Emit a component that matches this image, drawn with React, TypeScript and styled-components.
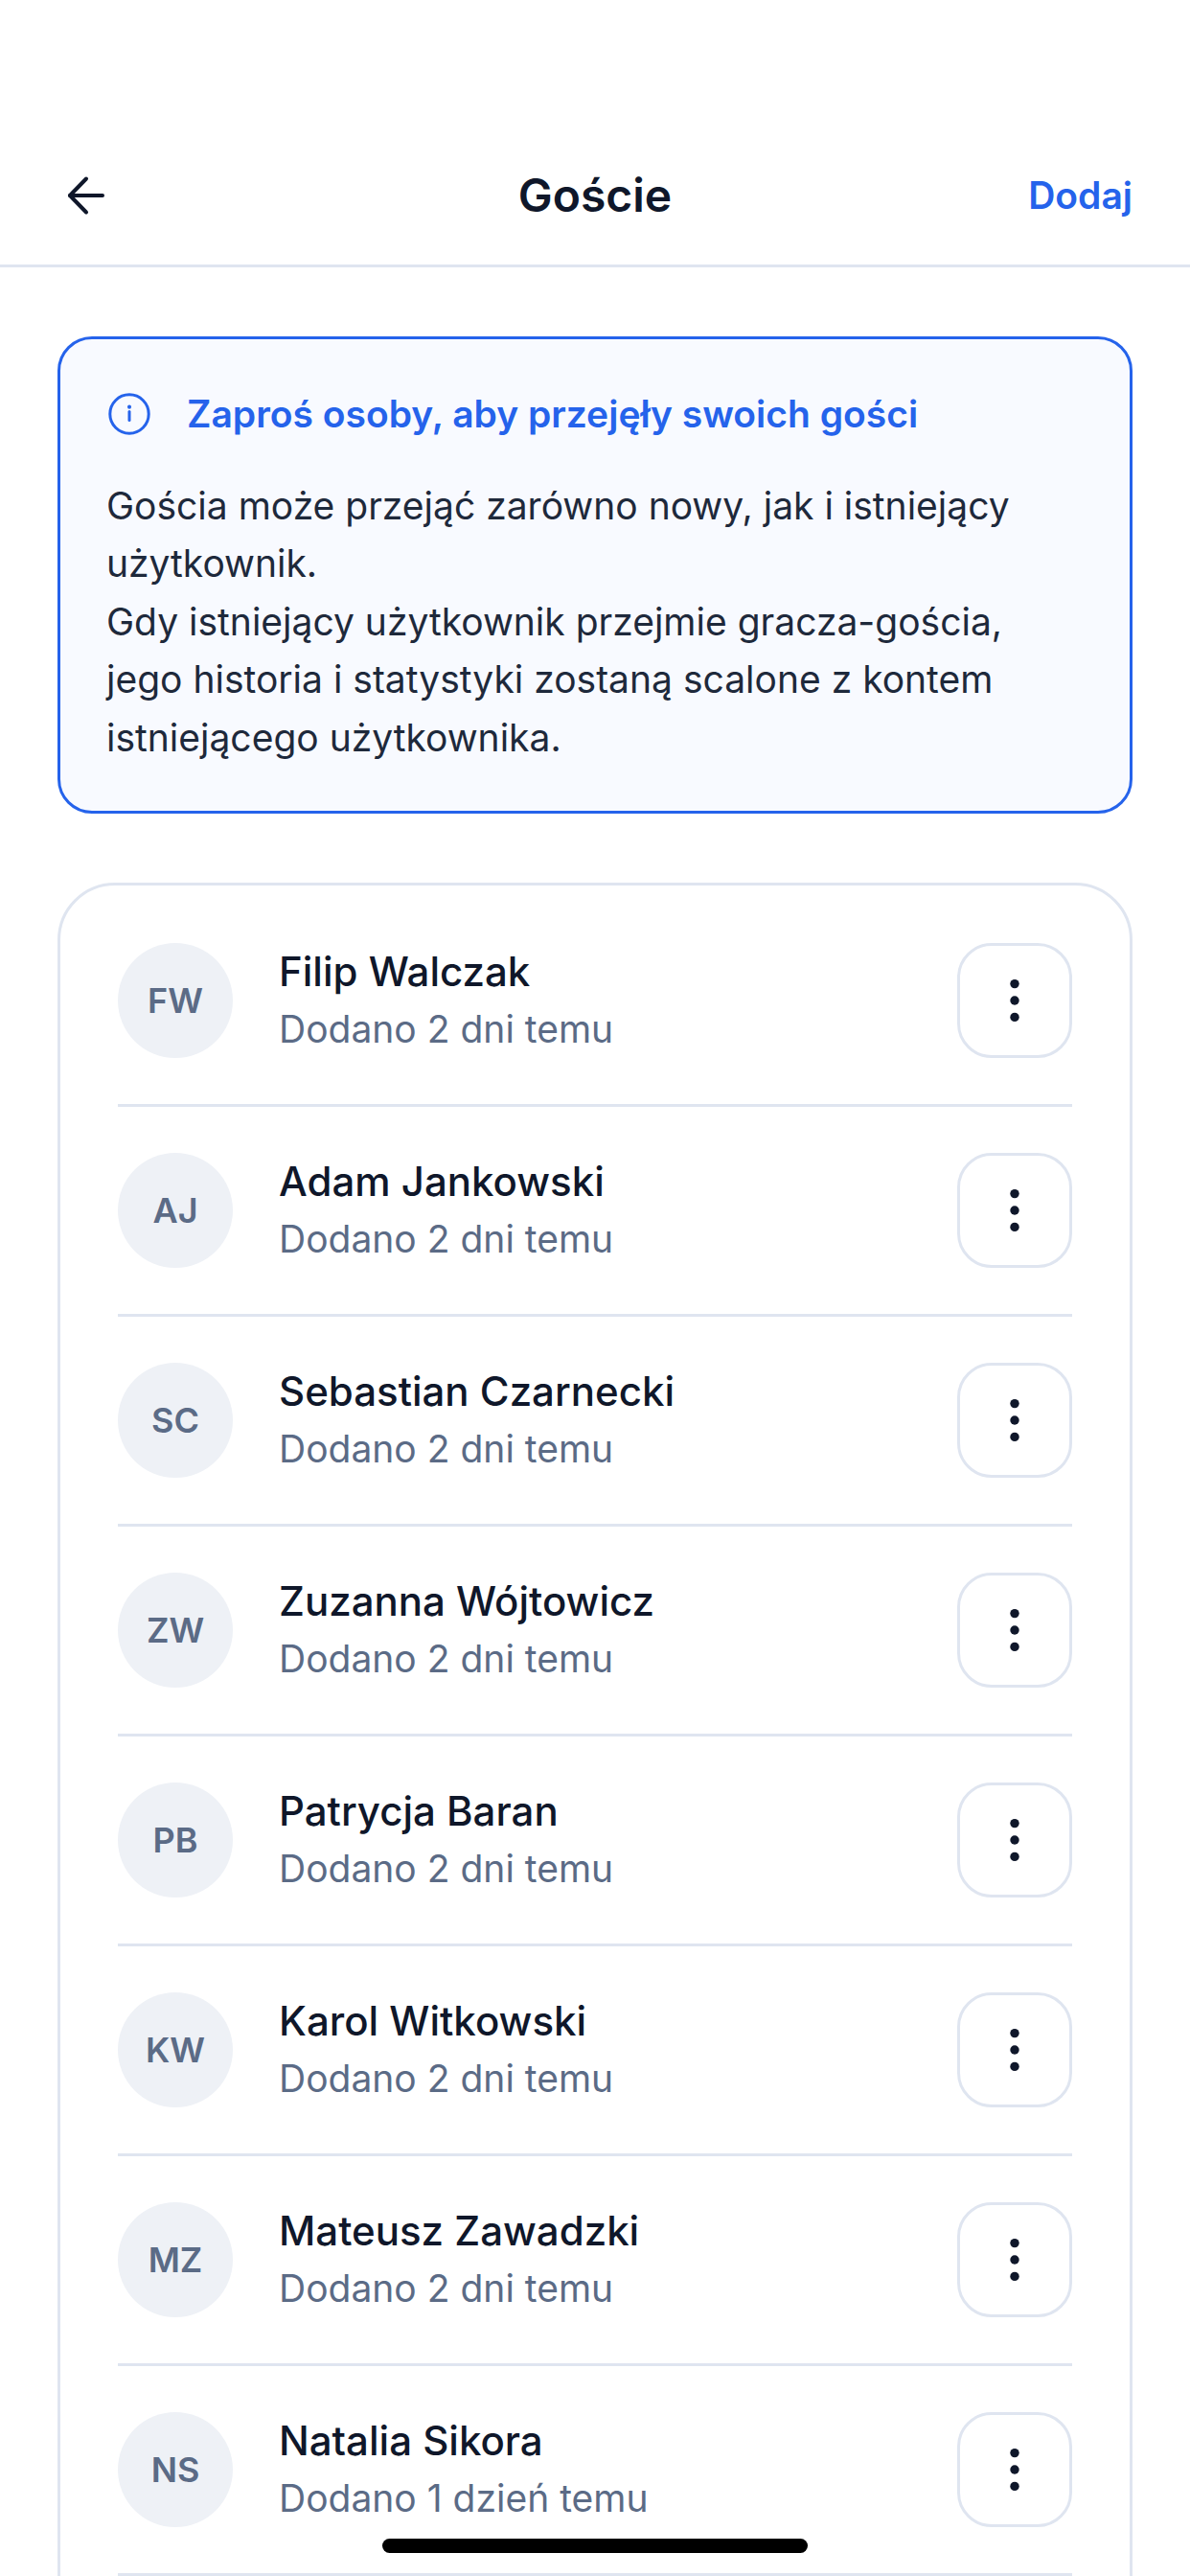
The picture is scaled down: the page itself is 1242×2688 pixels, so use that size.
import { createGlobalStyle } from "styled-components";
import styled from "styled-components";

const guests = [
  { initials: "FW", name: "Filip Walczak", added: "Dodano 2 dni temu" },
  { initials: "AJ", name: "Adam Jankowski", added: "Dodano 2 dni temu" },
  { initials: "SC", name: "Sebastian Czarnecki", added: "Dodano 2 dni temu" },
  { initials: "ZW", name: "Zuzanna Wójtowicz", added: "Dodano 2 dni temu" },
  { initials: "PB", name: "Patrycja Baran", added: "Dodano 2 dni temu" },
  { initials: "KW", name: "Karol Witkowski", added: "Dodano 2 dni temu" },
  { initials: "MZ", name: "Mateusz Zawadzki", added: "Dodano 2 dni temu" },
  { initials: "NS", name: "Natalia Sikora", added: "Dodano 1 dzień temu" },
];

const App = () => {
  return (
    <Screen>
      <GlobalStyle />
      <Header>
        <BackButton aria-label="Wstecz">
          <svg width="42" height="42" viewBox="0 0 42 42" fill="none" stroke="#0f172a" strokeWidth="4" strokeLinecap="round" strokeLinejoin="round">
            <path d="M37 21H3" />
            <path d="M20 3.5 3 21l17 17.5" />
          </svg>
        </BackButton>
        <Title>Goście</Title>
        <AddLink>Dodaj</AddLink>
      </Header>
      <Content>
        <InfoBox>
          <InfoHeading>
            <svg width="48" height="48" viewBox="0 0 48 48" fill="none" stroke="#2563eb" strokeWidth="3" strokeLinecap="round">
              <circle cx="24" cy="24" r="20.2" />
              <path d="M24 21.5v9" />
              <path d="M24 16.5v.2" strokeWidth="4" />
            </svg>
            <span>Zaproś osoby, aby przejęły swoich gości</span>
          </InfoHeading>
          <InfoText>
            Gościa może przejąć zarówno nowy, jak i istniejący użytkownik.
            <br />
            Gdy istniejący użytkownik przejmie gracza-gościa, jego historia i statystyki zostaną scalone z kontem istniejącego użytkownika.
          </InfoText>
        </InfoBox>
        <GuestCard>
          {guests.map((guest) => (
            <GuestRow key={guest.name}>
              <Avatar>{guest.initials}</Avatar>
              <GuestText>
                <GuestName>{guest.name}</GuestName>
                <GuestAdded>{guest.added}</GuestAdded>
              </GuestText>
              <MoreButton aria-label="Więcej">
                <svg width="12" height="46" viewBox="0 0 12 46" fill="#0f172a">
                  <circle cx="6" cy="5.6" r="4.7" />
                  <circle cx="6" cy="23" r="4.7" />
                  <circle cx="6" cy="40.4" r="4.7" />
                </svg>
              </MoreButton>
            </GuestRow>
          ))}
        </GuestCard>
      </Content>
      <HomeIndicator />
    </Screen>
  );
};

export default App;

const GlobalStyle = createGlobalStyle`
  html, body {
    margin: 0;
    padding: 0;
    background: #ffffff;
  }
  * {
    box-sizing: border-box;
  }
`;

const Screen = styled.div`
  position: relative;
  width: 1242px;
  height: 2688px;
  overflow: hidden;
  background: #ffffff;
  font-family: Inter, "Noto Sans", sans-serif;
  color: #0f172a;
`;

const Header = styled.header`
  height: 279px;
  padding: 132px 60px 0;
  border-bottom: 3px solid #dfe5f0;
  display: grid;
  grid-template-columns: 1fr auto 1fr;
  align-items: center;
`;

const BackButton = styled.button`
  justify-self: start;
  width: 60px;
  height: 60px;
  margin-left: 10px;
  padding: 0;
  border: 0;
  background: none;
  display: flex;
  align-items: center;
`;

const Title = styled.h1`
  margin: 0;
  font-size: 48px;
  font-weight: 600;
  line-height: 60px;
`;

const AddLink = styled.span`
  justify-self: end;
  font-size: 39px;
  font-weight: 600;
  line-height: 60px;
  color: #2563eb;
`;

const Content = styled.main`
  padding: 72px 60px 0;
  display: flex;
  flex-direction: column;
  gap: 72px;
`;

const InfoBox = styled.section`
  padding: 48px 48px 46px;
  border: 3px solid #2563eb;
  border-radius: 36px;
  background: #f8faff;
`;

const InfoHeading = styled.div`
  display: flex;
  align-items: center;
  gap: 36px;
  font-size: 39px;
  font-weight: 600;
  line-height: 60px;
  color: #2563eb;
`;

const InfoText = styled.p`
  margin: 36px 0 0;
  font-size: 39px;
  line-height: 60.4px;
  color: #1e293b;
`;

/* the list runs on below the fold, so the card has no visible bottom edge */
const GuestCard = styled.section`
  min-height: 2000px;
  padding: 12px 60px 0;
  border: 3px solid #dfe5f0;
  border-radius: 60px;
`;

const GuestRow = styled.div`
  display: flex;
  align-items: center;
  height: 219px;
  border-bottom: 3px solid #dfe5f0;
`;

const Avatar = styled.div`
  flex: none;
  width: 120px;
  height: 120px;
  border-radius: 50%;
  background: #eef1f6;
  display: flex;
  align-items: center;
  justify-content: center;
  font-size: 36px;
  font-weight: 600;
  color: #5b6b86;
`;

const GuestText = styled.div`
  flex: 1;
  min-width: 0;
  margin-left: 48px;
`;

const GuestName = styled.div`
  font-size: 42px;
  font-weight: 500;
  line-height: 60px;
  color: #0f172a;
`;

const GuestAdded = styled.div`
  font-size: 39px;
  line-height: 60px;
  color: #5b6b86;
`;

const MoreButton = styled.button`
  flex: none;
  width: 120px;
  height: 120px;
  padding: 0;
  border: 3px solid #dfe5f0;
  border-radius: 36px;
  background: #ffffff;
  display: flex;
  align-items: center;
  justify-content: center;
`;

const HomeIndicator = styled.div`
  position: absolute;
  left: 399px;
  top: 2649px;
  width: 444px;
  height: 15px;
  border-radius: 8px;
  background: #000000;
`;
